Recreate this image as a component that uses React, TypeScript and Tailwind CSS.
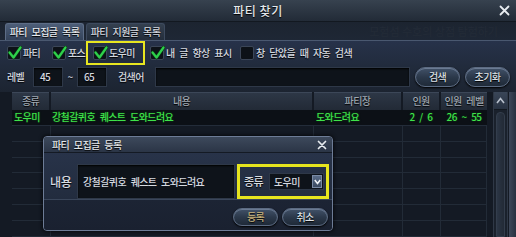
import React from "react";

const font = "font-['Noto_Sans_CJK_KR','Noto_Sans',sans-serif]";
const shadow = "[text-shadow:0_1px_1px_#000]";
const small = "text-[10px] font-medium tracking-[-0.6px] [word-spacing:3px] leading-none";

function CheckBox({ checked }: { checked: boolean }) {
  return (
    <span className="relative block w-[14px] h-[14px] shrink-0 rounded-[2px] bg-[#0d1218] border border-[#3b4658]">
      {checked && (
        <svg className="absolute left-[0px] -top-[1px]" width="14" height="14" viewBox="0 0 14 14">
          <path d="M1.5 6.5 L5.5 11.5 L12.5 1.5" fill="none" stroke="#0a3a14" strokeWidth="3.6" strokeLinecap="round" strokeLinejoin="round" />
          <path d="M1.5 6.5 L5.5 11.5 L12.5 1.5" fill="none" stroke="#2fd04c" strokeWidth="2.2" strokeLinecap="round" strokeLinejoin="round" />
        </svg>
      )}
    </span>
  );
}

function Check({ label, checked, className = "" }: { label: string; checked: boolean; className?: string }) {
  return (
    <div className={`flex items-center gap-[2px] ${className}`}>
      <CheckBox checked={checked} />
      <span className={`${small} whitespace-nowrap text-[#d6dae0] ${shadow}`}>{label}</span>
    </div>
  );
}

function Pill({ label, w, gold }: { label: string; w: string; gold?: boolean }) {
  return (
    <button
      className={`${w} h-full rounded-full border border-[#5c6b82] bg-gradient-to-b from-[#425269] via-[#2c394b] to-[#1f2a38] shadow-[inset_0_1px_0_#6a7a92,0_1px_2px_#000] ${small} ${shadow} ${gold ? "text-[#c9b47e]" : "text-[#dde1e6]"}`}
    >
      {label}
    </button>
  );
}

function Field({ children, className = "" }: { children?: React.ReactNode; className?: string }) {
  return (
    <div className={`h-full flex items-center bg-[#0e131a] border border-[#2e3848] shadow-[inset_0_1px_2px_#000] ${small} whitespace-nowrap text-[#d6dae0] ${className}`}>
      {children}
    </div>
  );
}

const cols = "grid grid-cols-[37px_261px_87px_36px_46px] gap-x-[2px]";

export default function App() {
  const emptyRows = Array.from({ length: 7 });
  return (
    <div className={`relative w-[516px] h-[237px] overflow-hidden bg-[#1a2230] ${font} select-none`}>
      {/* title bar */}
      <div className="h-[22px] grid grid-cols-[1fr_auto_1fr] items-center bg-gradient-to-b from-[#37424f] to-[#222b37] border-b border-[#121820]">
        <div />
        <span className={`text-[12px] font-medium tracking-[0.5px] leading-none text-[#e4e7ea] ${shadow}`}>파티 찾기</span>
        <div className="flex justify-end pr-[6px]">
          <svg width="11" height="11" viewBox="0 0 11 11">
            <path d="M1.5 1.5 L9.5 9.5 M9.5 1.5 L1.5 9.5" stroke="#e8ecf0" strokeWidth="1.8" strokeLinecap="round" />
          </svg>
        </div>
      </div>

      {/* tabs */}
      <div className="h-[18px] flex items-end pl-[5px] gap-[2px] bg-gradient-to-b from-[#1c2430] to-[#1e2735]">
        <div className={`w-[79px] h-[17px] flex items-center justify-center rounded-t-[3px] border border-b-0 border-[#5d6d86] bg-gradient-to-b from-[#4d5e78] to-[#34435a] ${small} text-[#e8ebee] ${shadow}`}>
          파티 모집글 목록
        </div>
        <div className={`w-[79px] h-[17px] flex items-center justify-center rounded-t-[3px] border border-b-0 border-[#3d4a5e] bg-gradient-to-b from-[#34404f] to-[#242e3c] ${small} text-[#d6dae0] ${shadow}`}>
          파티 지원글 목록
        </div>
        <span className="ml-auto mr-[18px] mb-[3px] text-[11px] leading-none text-[#232b37]">모험섬 수호의 상점 탐험하기</span>
      </div>

      {/* filter panel */}
      <div className="bg-gradient-to-b from-[#27324a] via-[#212b3c] to-[#1c2431] border-t border-[#4a5870] pl-[7px] pr-[6px]">
        <div className="h-[24px] flex items-center">
          <Check label="파티" checked className="w-[45px]" />
          <Check label="포스" checked className="w-[34px]" />
          <div className="w-[59px] h-[24px] flex items-center pl-[5px] border-2 border-[#e8e620]">
            <Check label="도우미" checked />
          </div>
          <Check label="내 글 항상 표시" checked className="ml-[5px] w-[90px]" />
          <Check label="창 닫았을 때 자동 검색" checked={false} />
        </div>
        <div className={`mt-[2px] h-[20px] flex items-center ${small} text-[#d6dae0] ${shadow}`}>
          <span className="w-[26px]">레벨</span>
          <Field className="w-[30px] pl-[6px]">45</Field>
          <span className="w-[14px] text-center">~</span>
          <Field className="w-[30px] pl-[6px]">65</Field>
          <span className="ml-[11px] w-[37px]">검색어</span>
          <Field className="w-[255px]" />
          <div className="ml-[5px] h-[20px] flex gap-[5px]">
            <Pill label="검색" w="w-[45px]" />
            <Pill label="초기화" w="w-[45px]" />
          </div>
        </div>
        <div className="h-[5px]" />
      </div>

      {/* list */}
      <div className="flex h-[145px] bg-[#141a24]">
        <div className="ml-[12px] w-[475px] flex flex-col">
          <div className={`${cols} h-[18px]`}>
            {["종류", "내용", "파티장", "인원", "인원 레벨"].map((h) => (
              <div
                key={h}
                className={`flex items-center justify-center bg-gradient-to-b from-[#2d3746] to-[#222a36] border-t border-[#3c4758] ${small} text-[#9ea6b0] ${shadow}`}
              >
                {h}
              </div>
            ))}
          </div>
          <div className={`${cols} h-[16px] bg-[#0c1016] border-b border-[#232c39] ${small} text-[#3fe24a] [text-shadow:0_0_2px_#0b4a12]`}>
            <div className="flex items-center pl-[2px]">도우미</div>
            <div className="flex items-center pl-[1px]">강철갈퀴호 퀘스트 도와드려요</div>
            <div className="flex items-center pl-[2px]">도와드려요</div>
            <div className="flex items-center justify-center">2 / 6</div>
            <div className="flex items-center justify-center">26 ~ 55</div>
          </div>
          {emptyRows.map((_, i) => (
            <div key={i} className={`${cols} h-[16px] border-b border-[#222b37]`}>
              <div className="border-r border-[#222b37] -mr-[2px]" />
              <div className="border-r border-[#222b37] -mr-[2px]" />
              <div className="border-r border-[#222b37] -mr-[2px]" />
              <div className="border-r border-[#222b37] -mr-[2px]" />
              <div className="border-r border-[#222b37]" />
            </div>
          ))}
        </div>
        <div className="ml-[6px] w-[15px] flex flex-col bg-[#1a212c] border-x border-[#2f3846]">
          <div className="h-[18px] flex items-center justify-center bg-gradient-to-b from-[#3a4658] to-[#283242] border-b border-[#121820]">
            <svg width="9" height="7" viewBox="0 0 9 7">
              <path d="M1 6 L4.5 1.5 L8 6" fill="none" stroke="#b8c0cc" strokeWidth="1.6" />
            </svg>
          </div>
          <div className="mx-auto mt-[2px] w-[9px] flex-1 rounded-t-[4px] bg-gradient-to-r from-[#2b3544] to-[#222a36] border border-[#333d4c]" />
        </div>
        <div className="ml-[1px] w-[7px] bg-gradient-to-r from-[#3e485a] to-[#283140]" />
      </div>

      {/* register dialog */}
      <div className="absolute left-[43px] top-[136px] w-[290px] h-[95px] flex flex-col rounded-[4px] border border-[#6d7c96] bg-[#1f2839] shadow-[0_0_4px_#000] overflow-hidden">
        <div className="h-[16px] flex items-center justify-between pl-[8px] pr-[5px] bg-gradient-to-b from-[#3d495c] to-[#2b3546] border-b border-[#141a24]">
          <span className={`${small} text-[#e4e7ea] ${shadow}`}>파티 모집글 등록</span>
          <svg width="10" height="10" viewBox="0 0 10 10">
            <path d="M1.5 1.5 L8.5 8.5 M8.5 1.5 L1.5 8.5" stroke="#e8ecf0" strokeWidth="1.7" strokeLinecap="round" />
          </svg>
        </div>
        <div className="h-[46px] pt-[11px] flex items-center pl-[6px] bg-gradient-to-b from-[#283349] to-[#222c3e]">
          <span className={`w-[27px] text-[12px] font-medium tracking-[-0.3px] leading-none text-[#d8dce2] ${shadow}`}>내용</span>
          <Field className="w-[158px] h-[17px] pl-[5px]">강철갈퀴호 퀘스트 도와드려요</Field>
          <div className="ml-[2px] w-[92px] h-[35px] flex items-center pl-[4px] border-[3px] border-[#e6e41e]">
            <span className={`w-[25px] text-[11px] font-medium tracking-[-0.5px] leading-none text-[#d8dce2] ${shadow}`}>종류</span>
            <div className={`w-[55px] h-[17px] flex items-center justify-between pl-[4px] pr-[1px] bg-[#0e131a] border border-[#2e3848] ${small} text-[#d6dae0]`}>
              <span>도우미</span>
              <span className="w-[10px] h-[13px] flex items-center justify-center bg-gradient-to-b from-[#5a6c88] to-[#3c4a60] border border-[#7a8aa4]">
                <svg width="7" height="6" viewBox="0 0 7 6">
                  <path d="M0.8 1 L3.5 4.5 L6.2 1" fill="none" stroke="#f0f2f5" strokeWidth="1.6" />
                </svg>
              </span>
            </div>
          </div>
        </div>
        <div className="flex-1 flex items-center justify-end gap-[4px] pr-[4px] pt-[3px] border-t border-[#3a465a] bg-gradient-to-b from-[#1c2434] to-[#1a2130]">
          <div className="h-[18px] flex gap-[4px]">
            <Pill label="등록" w="w-[45px]" gold />
            <Pill label="취소" w="w-[46px]" />
          </div>
        </div>
      </div>
    </div>
  );
}
